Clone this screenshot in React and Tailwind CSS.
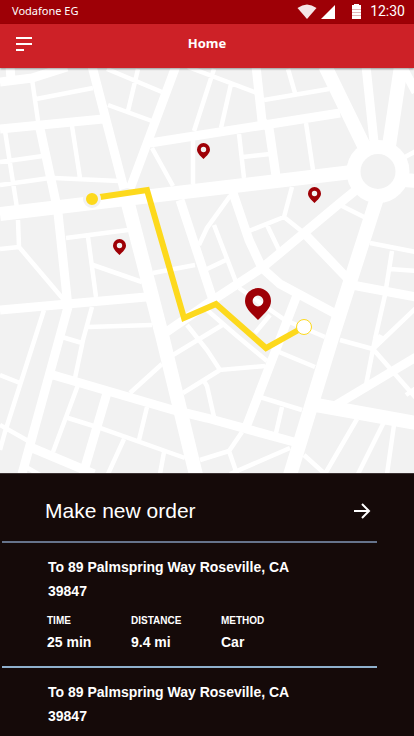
const STREETS = [
  {
    width: 4.5,
    d: [
      "M32 79L38 121", "M36 99L93 88", "M72 126L80 178", "M54 178L119 181", "M0 162L43 156", "M0 185L50 178",
      "M5 131L17 208", "M108 105L152 121", "M107 69L162 92", "M138 69L128 111", "M188 67L257 93", "M214 69L194 131",
      "M193 138L193 184", "M152 148L173 186", "M231 84L221 128", "M288 69L295 93", "M264 100L329 89",
      "M405 157L416 151", "M306 123L313 170", "M239 134L244 178", "M243 157L270 154", "M292 187L284 217",
      "M230 196L207 228L199 245", "M249 231L284 217L304 233", "M340 205L364 217", "M370 243L416 252",
      "M392 251L385 295L375 339", "M390 269L416 271", "M416 308L373 349", "M267 225L279 250", "M214 225L236 282",
      "M207 269L226 260", "M153 273L195 265", "M239 288L285 320L325 337", "M270 315L255 333",
      "M207 310L237 336L267 361", "M224 324L173 355", "M187 325L207 350L220 370L265 366", "M220 370L183 393",
      "M204 381L207 386L214 417", "M260 397L302 410", "M282 407L276 433", "M279 352L315 367",
      "M242 432L229 451L200 460", "M229 451L237 474", "M230 474L290 448", "M304 455L325 474L357 419",
      "M340 340L373 349", "M376 335L373 349L366 385", "M373 349L416 398", "M406 395L416 388",
      "M384 422L358 474", "M394 425L387 474", "M18 220L19 247L64 300", "M0 249L19 247", "M66 238L128 230",
      "M88 237L96 297", "M93 265L142 282", "M44 310L5 432L0 450", "M92 307L83 340L75 378", "M88 327L152 325",
      "M62 337L82 343", "M0 375L20 383", "M0 425L30 442", "M26 467L40 475", "M78 385L53 452",
      "M68 418L100 428L185 458", "M147 407L139 440", "M124 439L108 474", "M164 452L160 474", "M162 364L130 393",
      "M373 349L381 335",
    ],
  },
  {
    width: 9,
    d: [
      "M92 66L124 189", "M176 66L130 189", "M0 129L103 119", "M0 82L32 78L67 67", "M10 66L11 80",
      "M39 124L57 207", "M150 143L207 134L340 113", "M256 66L262 121L269 128L276 176", "M366 66L374 142",
      "M402 66L416 92", "M232 190L249 240L262 268", "M262 268L280 284L334 313", "M304 233L347 278",
      "M180 200L213 300", "M297 295L245 430", "M53 375L173 410L207 418L294 442", "M58 213L68 307L22 474",
      "M0 310L146 297", "M30 447L94 474", "M107 393L83 474", "M352 285L416 297",
      "M356 190L340 203L262 268L207 304L165 333", "M336 405L416 357",
    ],
  },
  {
    width: 14,
    d: [
      "M0 214L352 172", "M126 196L162 335L196 475", "M325 66L365 148", "M401 66L389 146",
      "M377 198L332 338L290 475", "M316 405L416 423", "M404 180L416 181",
    ],
  },
];

const PINS = [
  { x: 203, y: 150 },
  { x: 314, y: 194 },
  { x: 119, y: 246 },
];

const ORDERS = [
  { id: 1, address: "To 89 Palmspring Way Roseville, CA 39847", time: "25 min", distance: "9.4 mi", method: "Car" },
  { id: 2, address: "To 89 Palmspring Way Roseville, CA 39847" },
];

function StatusBar() {
  return (
    <div className="flex h-6 items-center justify-between bg-[#9e0006] pr-[9px] pb-[3px] pl-3 text-white">
      <span className="font-['Noto_Sans',sans-serif] text-[11px] leading-5">Vodafone EG</span>
      <div className="flex items-center">
        <svg className="h-5 w-[66px]" viewBox="297 0 66 20" aria-hidden="true">
          <path d="M297.5 7Q307 0 316.500 7L307 18Z" fill="#f5e5e6" />
          <path d="M335 4V18H321Z" fill="#fff" />
          <path d="M354 4V3H359V4H361V18H352V4Z" fill="#fff" />
          <path d="M352 8.500H361M352 11.500H361M352 14.500H361" stroke="#e3b8ba" />
        </svg>
        <span className="ml-[7px] font-['Roboto',sans-serif] text-[14px] leading-5">12:30</span>
      </div>
    </div>
  );
}

function Header() {
  return (
    <header className="relative grid h-11 grid-cols-[1fr_auto_1fr] items-center bg-[#cd2127] px-4 pb-1 text-white shadow-[0_1px_2px_rgba(0,0,0,0.4)]">
      <button type="button" aria-label="Open menu" className="w-4">
        <svg className="block h-4 w-4" viewBox="0 0 16 16" aria-hidden="true">
          <path d="M0 2H16M0 8H16M0 14H8" stroke="#fff" strokeWidth="2" />
        </svg>
      </button>
      <h1 className="pb-[2px] font-['Noto_Sans',sans-serif] text-[13px] leading-5 font-bold">Home</h1>
    </header>
  );
}

function Pin({ x, y, scale = 1 }) {
  return (
    <g transform={`translate(${x + 0.5} ${y}) scale(${scale})`}>
      <path
        fillRule="evenodd"
        fill="#9e0006"
        d="M0-7A6.500 6.500 0 0 1 6.500-.5C6.500 3 3.500 5.500 0 9C-3.500 5.500-6.500 3-6.500-.5A6.500 6.500 0 0 1 0-7ZM0-3.200A2.700 2.700 0 1 0 0 2.200A2.700 2.700 0 1 0 0-3.200Z"
      />
    </g>
  );
}

function RouteMap() {
  return (
    <svg
      className="block h-[405px] w-full bg-[#f2f2f2]"
      viewBox="0 68 414 405"
      preserveAspectRatio="xMidYMid slice"
      role="img"
      aria-label="Route map"
    >
      <g fill="none" stroke="#fff">
        {STREETS.map((group) => (
          <path key={group.width} strokeWidth={group.width} d={group.d.join("")} />
        ))}
      </g>
      <circle cx="378" cy="171.500" r="24.500" fill="#f2f2f2" stroke="#fff" strokeWidth="14" />
      <path d="M100 197L147 190L184 318L216 304L266 348L302 328" fill="none" stroke="#fdd91d" strokeWidth="6" />
      <circle cx="92" cy="199" r="7.500" fill="#fdd91d" stroke="#f2f2f2" strokeWidth="3" />
      <circle cx="304" cy="327" r="7.500" fill="#fff" stroke="#fdd91d" />
      {PINS.map((pin) => (
        <Pin key={pin.x} x={pin.x} y={pin.y} />
      ))}
      <Pin x={257.500} y={302} scale={2} />
    </svg>
  );
}

function Stat({ label, value }) {
  return (
    <div>
      <dt className="text-[10px] leading-4">{label}</dt>
      <dd className="mt-[3px] text-[14px] leading-5">{value}</dd>
    </div>
  );
}

function OrderCard({ order }) {
  return (
    <li className="pt-3 font-bold">
      <p className="ml-[46px] max-w-[280px] text-[14px] leading-6">{order.address}</p>
      {order.time ? (
        <dl className="mt-[10px] ml-[45px] grid grid-cols-[84px_90px_1fr] pb-[14px]">
          <Stat label="TIME" value={order.time} />
          <Stat label="DISTANCE" value={order.distance} />
          <Stat label="METHOD" value={order.method} />
        </dl>
      ) : null}
    </li>
  );
}

export default function App() {
  return (
    <div className="min-h-screen bg-[#150a09] font-['Liberation_Sans',Arial,sans-serif] text-white">
      <StatusBar />
      <Header />
      <main>
        <RouteMap />
        <section className="border-t border-[#3c3232] pr-[37px] pb-2 pl-[2px]">
          <button
            type="button"
            className="flex h-[69px] w-full items-center justify-between border-b-2 border-[#66738b] pt-[6px] pr-[6px] pl-[43px] text-left"
          >
            <span className="text-[21px] leading-7">Make new order</span>
            <svg className="h-4 w-[18px]" viewBox="0 0 18 16" fill="none" stroke="#fff" strokeWidth="2" aria-hidden="true">
              <path d="M1 8H16M9 1L16 8L9 15" />
            </svg>
          </button>
          <ul className="divide-y-2 divide-[#8fb0cd]">
            {ORDERS.map((order) => (
              <OrderCard key={order.id} order={order} />
            ))}
          </ul>
        </section>
      </main>
    </div>
  );
}
